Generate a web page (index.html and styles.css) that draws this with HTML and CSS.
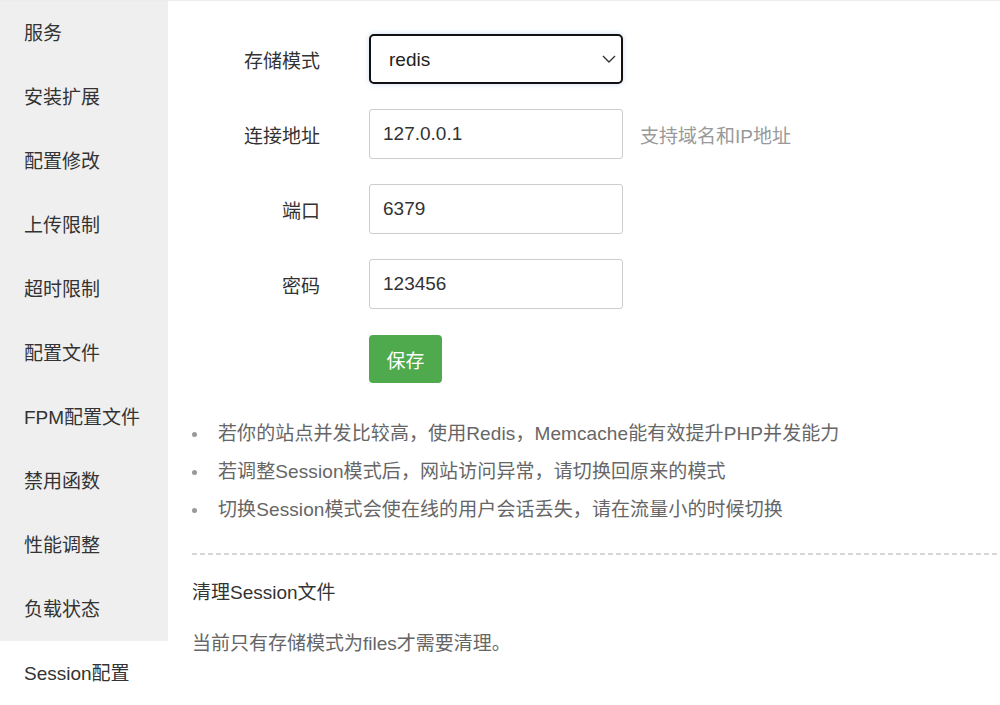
FILE: index.html
```html
<!DOCTYPE html>
<html lang="zh-CN">
<head>
  <meta charset="UTF-8">
  <meta name="viewport" content="width=device-width, initial-scale=1.0">
  <link rel="stylesheet" href="styles.css">
</head>
<body>
<div class="layout">
  <ul class="side-menu">
    <li class="menu-item">服务</li>
    <li class="menu-item">安装扩展</li>
    <li class="menu-item">配置修改</li>
    <li class="menu-item">上传限制</li>
    <li class="menu-item">超时限制</li>
    <li class="menu-item">配置文件</li>
    <li class="menu-item">FPM配置文件</li>
    <li class="menu-item">禁用函数</li>
    <li class="menu-item">性能调整</li>
    <li class="menu-item">负载状态</li>
    <li class="menu-item active">Session配置</li>
  </ul>

  <div class="main">
    <form class="session-form">
      <div class="form-row">
        <label class="form-label">存储模式</label>
        <div class="select-box">
          <select class="form-select">
            <option>files</option>
            <option selected>redis</option>
            <option>memcache</option>
            <option>memcached</option>
          </select>
          <svg class="select-arrow" width="14" height="8" viewBox="0 0 14 8">
            <path d="M1 1 L7 7 L13 1" fill="none" stroke="#333" stroke-width="1.4"/>
          </svg>
        </div>
      </div>
      <div class="form-row">
        <label class="form-label">连接地址</label>
        <input class="form-input" type="text" value="127.0.0.1">
        <span class="form-hint">支持域名和IP地址</span>
      </div>
      <div class="form-row">
        <label class="form-label">端口</label>
        <input class="form-input" type="text" value="6379">
      </div>
      <div class="form-row">
        <label class="form-label">密码</label>
        <input class="form-input" type="text" value="123456">
      </div>
      <div class="form-row last">
        <span class="form-label"></span>
        <button class="btn-save" type="button">保存</button>
      </div>
    </form>

    <ul class="tips">
      <li>若你的站点并发比较高，使用Redis，Memcache能有效提升PHP并发能力</li>
      <li>若调整Session模式后，网站访问异常，请切换回原来的模式</li>
      <li>切换Session模式会使在线的用户会话丢失，请在流量小的时候切换</li>
    </ul>

    <div class="divider"></div>

    <h4 class="sub-title">清理Session文件</h4>
    <p class="sub-desc">当前只有存储模式为files才需要清理。</p>
  </div>
</div>
</body>
</html>
```

FILE: styles.css
```css
body {
  margin: 0;
  border-top: 1px solid #ececec;
  background: #fff;
  color: #333;
  font-family: "Liberation Sans", "Noto Sans CJK SC", sans-serif;
  font-size: 19px;
}

.layout {
  display: flex;
  align-items: flex-start;
}

/* 左侧菜单 */
.side-menu {
  width: 168px;
  flex-shrink: 0;
  margin: 0;
  padding: 0;
  list-style: none;
  background-color: #efefef;
}

.menu-item {
  height: 64px;
  line-height: 66px;
  padding-left: 24px;
  color: #333;
  white-space: nowrap;
}

.menu-item.active {
  background-color: #fff;
}

/* 右侧内容 */
.main {
  flex: 1;
  padding: 33px 0 0 24px;
}

.session-form {
  margin: 0;
}

.form-row {
  display: flex;
  align-items: center;
  height: 50px;
  margin-bottom: 25px;
}

.form-row.last {
  margin-bottom: 0;
}

.form-label {
  width: 128px;
  margin-right: 49px;
  text-align: right;
  color: #333;
}

.select-box {
  position: relative;
  width: 254px;
  height: 50px;
}

.form-select {
  width: 100%;
  height: 100%;
  box-sizing: border-box;
  appearance: none;
  -webkit-appearance: none;
  padding: 0 36px 0 18px;
  border: 2px solid #111;
  border-radius: 5px;
  background: #fff;
  box-shadow: 0 0 5px 1px rgba(90, 140, 220, 0.22);
  color: #222;
  font: inherit;
  outline: none;
}

.select-arrow {
  position: absolute;
  top: 21px;
  right: 7px;
  pointer-events: none;
}

.form-input {
  width: 254px;
  height: 50px;
  box-sizing: border-box;
  padding: 0 13px;
  border: 1px solid #ccc;
  border-radius: 3px;
  color: #333;
  font: inherit;
  outline: none;
}

.form-hint {
  margin-left: 17px;
  color: #999;
  white-space: nowrap;
}

.btn-save {
  width: 73px;
  height: 48px;
  border: none;
  border-radius: 4px;
  background-color: #4fa94d;
  color: #fff;
  font: inherit;
  cursor: pointer;
}

/* 提示说明 */
.tips {
  margin: 31px 0 0;
  padding: 0;
  list-style: none;
  color: #666;
}

.tips li {
  display: flex;
  align-items: center;
  line-height: 38px;
  letter-spacing: 0.1px;
}

.tips li::before {
  content: "";
  width: 5px;
  height: 5px;
  margin-right: 21px;
  border-radius: 50%;
  background-color: #999;
  flex-shrink: 0;
}

.divider {
  height: 2px;
  margin-top: 24px;
  background-image: repeating-linear-gradient(to right, #d6d6d6 0 5px, transparent 5px 8px);
}

.sub-title {
  margin: 24px 0 0;
  font-size: 19px;
  font-weight: normal;
  line-height: 28px;
  color: #333;
}

.sub-desc {
  margin: 23px 0 0;
  line-height: 28px;
  color: #666;
}
```
